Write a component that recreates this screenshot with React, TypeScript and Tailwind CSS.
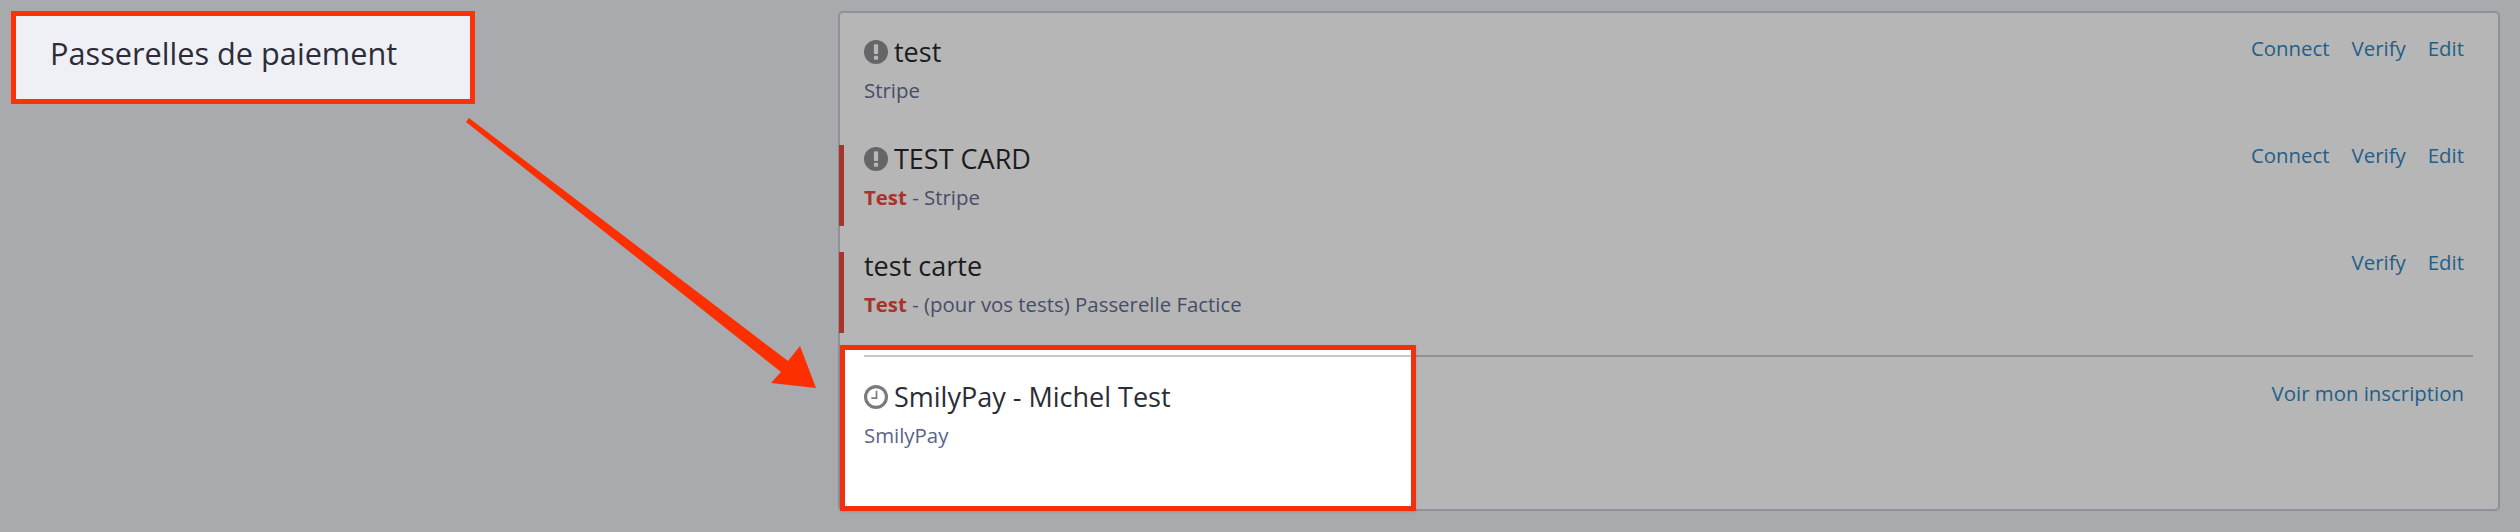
import React from 'react';

const font = { fontFamily: '"Open Sans", "Noto Sans", sans-serif' };

const AlertIcon = () => (
  <svg width="24" height="24" viewBox="0 0 23 23" className="shrink-0">
    <circle cx="11.5" cy="11.5" r="11.5" fill="#666668" />
    <rect x="9.5" y="4" width="4" height="9.5" rx="1" fill="#b8b8b8" />
    <rect x="9.5" y="15" width="4" height="4" rx="1" fill="#b8b8b8" />
  </svg>
);

const ClockIcon = () => (
  <svg width="24" height="24" viewBox="0 0 23 23" className="shrink-0" fill="none">
    <circle cx="11.5" cy="11.5" r="10" stroke="#7b7b7d" strokeWidth="3" />
    <path d="M12 5.5V12.5H7" stroke="#7b7b7d" strokeWidth="1.6" />
  </svg>
);

type RowProps = {
  title: string;
  icon?: React.ReactNode;
  isTest?: boolean;
  detail: string;
  links: string[];
};

const GatewayRow = ({ title, icon, isTest, detail, links }: RowProps) => (
  <div
    className={`relative z-10 -ml-px flex h-[81px] justify-between border-l-[5px] pl-5 pr-[34px] ${
      isTest ? 'border-[#a8332b]' : 'border-transparent'
    }`}
  >
    <div>
      <div className="flex h-7 items-center gap-1.5 text-[27px] leading-7 text-[#1c1c1f]">
        {icon}
        <span>{title}</span>
      </div>
      <div className="mt-2.5 text-[20.4px] leading-7 text-[#454e68]">
        {isTest && <strong className="font-bold text-[#a8332b]">Test</strong>}
        {isTest && ' - '}
        {detail}
      </div>
    </div>
    <div className="flex gap-[22px] text-[20.4px] leading-[21px] text-[#215f8a]">
      {links.map((link) => (
        <a key={link}>{link}</a>
      ))}
    </div>
  </div>
);

const App = () => {
  return (
    <div
      style={font}
      className="relative flex h-[532px] w-[2520px] items-start justify-between overflow-hidden bg-[#a9aaae] pl-[11px] pr-5 pt-[11px]"
    >
      <div className="flex h-[93px] w-[464px] items-start border-[5px] border-[#fa3208] bg-[#eff0f6] pl-[34px] pt-[17px] text-[30.7px] leading-10 text-[#2c2d38]">
        Passerelles de paiement
      </div>

      <div className="relative h-[500px] w-[1662px] rounded-[5px] border-2 border-[#8f9198] bg-[#b6b6b6] pt-[25px]">
        {/* white cut-out behind the last row */}
        <div className="absolute left-0 top-[332px] h-[166px] w-[576px] border-[5px] border-[#f0300e] bg-white shadow-sm">
          <div className="mt-[5px] ml-[19px] h-0.5 bg-[#c8c8cb]" />
        </div>

        <div className="flex flex-col gap-[26px]">
          <GatewayRow title="test" icon={<AlertIcon />} detail="Stripe" links={['Connect', 'Verify', 'Edit']} />
          <GatewayRow title="TEST CARD" icon={<AlertIcon />} isTest detail="Stripe" links={['Connect', 'Verify', 'Edit']} />
          <GatewayRow title="test carte" isTest detail="(pour vos tests) Passerelle Factice" links={['Verify', 'Edit']} />
        </div>

        <div className="ml-6 mr-[25px] mt-[22px] h-0.5 bg-[#8f9198]" />

        <div className="relative z-10 -ml-px mt-[26px] flex h-[81px] justify-between border-l-[5px] border-transparent pl-5 pr-[34px]">
          <div>
            <div className="flex h-7 items-center gap-1.5 text-[27px] leading-7 text-[#2b2d36]">
              <ClockIcon />
              <span>SmilyPay - Michel Test</span>
            </div>
            <div className="mt-2.5 text-[20.4px] leading-7 text-[#5a6488]">SmilyPay</div>
          </div>
          <a className="text-[20.4px] leading-[21px] text-[#215f8a]">Voir mon inscription</a>
        </div>
      </div>

      {/* annotation arrow */}
      <svg className="absolute left-0 top-0 z-20" width="2520" height="532" viewBox="0 0 2520 532">
        <path d="M469 118 L788 361 L800 346 L816 388 L771 383 L781 372 L466 122 Z" fill="#fc2f00" />
      </svg>
    </div>
  );
};

export default App;
